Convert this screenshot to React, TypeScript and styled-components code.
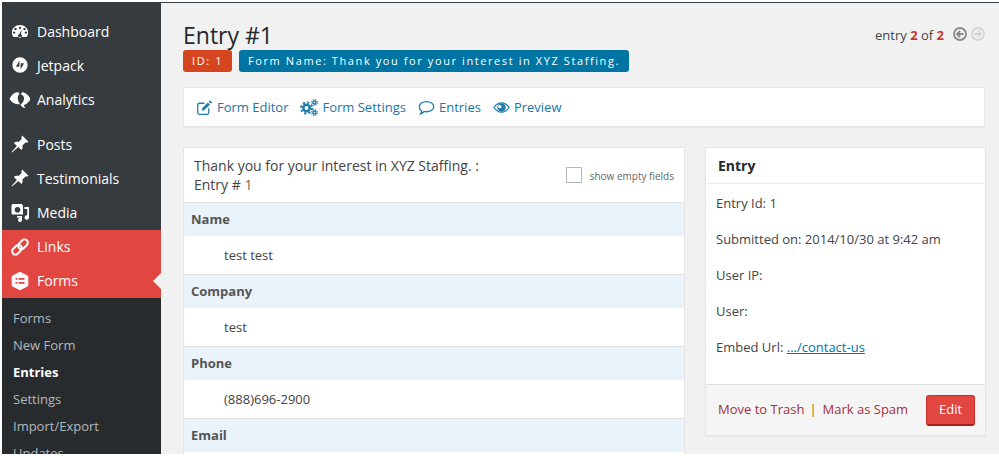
import React from "react";
import styled, { createGlobalStyle } from "styled-components";

const Global = createGlobalStyle`
  html, body { margin: 0; padding: 0; background: #fff; }
  body { font-family: "Open Sans", "Noto Sans", sans-serif; font-size: 13px; color: #444; }
`;
const Frame = styled.div`
  width: 999px; height: 456px; box-sizing: border-box; padding: 2px 0 2px 2px;
  overflow: hidden; position: relative; background: #fff;
`;
const TopLine = styled.div`
  position: absolute; left: 2px; right: 0; top: 2px; height: 1px; background: #3b4045;
`;
const Shell = styled.div`
  display: flex; height: 100%; background: #f1f1f1; overflow: hidden;
`;
const Sidebar = styled.nav`
  width: 159px; flex: none; background: #363b3f; overflow: hidden; display: flex; flex-direction: column;
  padding-top: 12px; box-sizing: border-box;
`;
const MenuItem = styled.div<{ $active?: boolean; $gapTop?: number; $height?: number }>`
  height: ${p => p.$height ?? 34}px; display: flex; align-items: center; position: relative; flex: none;
  margin-top: ${p => p.$gapTop ?? 0}px;
  background: ${p => (p.$active ? "#e14641" : "transparent")};
  color: #fff; font-size: 14px;
`;
const IconSlot = styled.span`
  width: 35px; display: flex; justify-content: center; flex: none; box-sizing: border-box;
  svg { display: block; }
`;
const Caret = styled.span`
  position: absolute; right: 0; top: 50%; margin-top: -8px; width: 0; height: 0;
  border: 8px solid transparent; border-right-color: #f1f1f1; border-left-width: 0;
`;
const SubMenu = styled.div`
  flex: 1; background: #272b2e; padding-top: 7px;
`;
const SubItem = styled.div<{ $current?: boolean }>`
  height: 27px; line-height: 27px; padding-left: 11px; font-size: 13px;
  color: ${p => (p.$current ? "#fff" : "#b4b9be")};
  font-weight: ${p => (p.$current ? 700 : 400)};
`;
const Main = styled.main`
  flex: 1; min-width: 0; padding: 0 14px 0 22px; overflow: hidden;
`;
const Header = styled.header`
  position: relative; height: 85px;
`;
const Title = styled.h1`
  margin: 0; padding-top: 19px; font-size: 23px; line-height: 29px; font-weight: 400; color: #23282d;
`;
const Badges = styled.div`
  display: flex; gap: 7px;
`;
const Badge = styled.span<{ $color: string }>`
  height: 22px; line-height: 22px; padding: 0 9px; border-radius: 3px; background: ${p => p.$color};
  color: #fff; font-size: 11px; letter-spacing: 1.59px; font-weight: 400;
`;
const Pager = styled.div`
  position: absolute; right: 0; top: 24px; display: flex; align-items: center; gap: 4px; font-size: 13px; color: #444;
  b { color: #c8372d; font-weight: 700; }
  svg { display: block; margin-top: -2px; }
`;
const PagerText = styled.span`
  margin-right: 5px;
`;
const Toolbar = styled.div`
  height: 40px; margin-bottom: 20px; box-sizing: border-box; background: #fff; border: 1px solid #e5e5e5;
  box-shadow: 0 1px 1px rgba(0,0,0,.04); display: flex; align-items: center; padding-left: 12px; gap: 12px;
`;
const ToolLink = styled.a`
  display: flex; align-items: center; gap: 4px; color: #1a76a5; font-size: 13px;
  svg { display: block; }
`;
const Columns = styled.div`
  display: flex; gap: 20px; align-items: flex-start;
`;
const EntryCard = styled.section`
  width: 502px; flex: none; box-sizing: border-box; background: #fff; border: 1px solid #e5e5e5; border-bottom: 0;
`;
const EntryHead = styled.div`
  height: 55px; box-sizing: border-box; padding: 8px 10px 0 10px; display: flex; justify-content: space-between;
  font-size: 14px; line-height: 19px; color: #444; border-bottom: 1px solid #e1e1e1;
`;
const Accent = styled.span`
  color: #7d6a50;
`;
const ShowEmpty = styled.label`
  display: flex; align-items: center; gap: 8px; font-size: 10px; color: #666; height: 19px; margin-top: 9px;
`;
const EmptyText = styled.span`
  margin-top: 4px;
`;
const FakeCheck = styled.span`
  width: 14px; height: 14px; border: 1px solid #b4b9be; display: block; background: #fff;
`;
const FieldLabel = styled.div`
  height: 33px; line-height: 33px; padding-left: 7px; background: #eaf2fa; font-weight: 700; font-size: 13px; color: #555;
`;
const FieldValue = styled.div`
  height: 38px; line-height: 38px; padding-left: 40px; font-size: 13px; color: #444; border-bottom: 1px solid #dfdfdf;
`;
const Side = styled.aside`
  width: 281px; flex: none; box-sizing: border-box; background: #fff; border: 1px solid #e5e5e5;
  box-shadow: 0 1px 1px rgba(0,0,0,.04);
`;
const SideTitle = styled.h2`
  margin: 0; height: 36px; line-height: 36px; box-sizing: border-box; padding-left: 12px; font-size: 14px; font-weight: 700;
  color: #23282d; border-bottom: 1px solid #eee;
`;
const SideBody = styled.div`
  padding: 1px 10px 0; height: 200px; box-sizing: border-box;
`;
const SideRow = styled.p`
  margin: 0; height: 36px; line-height: 36px; font-size: 13px; color: #444;
`;
const Link = styled.a`
  color: #0073aa; text-decoration: underline;
`;
const SideFoot = styled.div`
  height: 51px; box-sizing: border-box; background: #f5f5f5; border-top: 1px solid #dfdfdf;
  display: flex; align-items: center; padding: 0 10px 0 12px; font-size: 13px;
`;
const DangerLink = styled.a`
  color: #a3303a; margin-top: -2px;
`;
const Sep = styled.span`
  margin: -2px 6px 0 5px; color: #996800;
`;
const EditButton = styled.button`
  margin-left: auto; width: 49px; height: 31px; padding: 0 0 1px; box-sizing: border-box; font: inherit; color: #fff;
  background: #e14641; border: 1px solid #c9302a; border-bottom: 2px solid #a92019; border-radius: 3px;
`;

const Ico = ({ size = 18, children, vb = "0 0 20 20" }: { size?: number; children: React.ReactNode; vb?: string }) => (
  <svg width={size} height={size} viewBox={vb} fill="#fff">{children}</svg>
);
const Dashboard = () => (
  <Ico><path fillRule="evenodd" d="M10 3.2c-5 0-9 3.6-9 8.4 0 1.9.6 3.6 1.7 5h14.6c1.1-1.4 1.7-3.1 1.7-5 0-4.800-4-8.400-9-8.400zM5 6.500a1.300 1.300 0 1 1 0 2.600 1.300 1.300 0 0 1 0-2.600zm5-1.300a1.300 1.300 0 1 1 0 2.600 1.300 1.300 0 0 1 0-2.600zm5 1.300a1.300 1.300 0 1 1 0 2.600 1.300 1.300 0 0 1 0-2.600zM3.500 10.500a1.300 1.300 0 1 1 0 2.600 1.300 1.300 0 0 1 0-2.600zm13 0a1.300 1.300 0 1 1 0 2.600 1.300 1.300 0 0 1 0-2.600zM12 8.500l-1 5.100a2.100 2.100 0 1 1-2 0z"/></Ico>
);
const Jetpack = () => (
  <Ico><path fillRule="evenodd" d="M10 1.500a8.500 8.500 0 1 0 0 17 8.500 8.500 0 0 0 0-17zM9.300 5v7H5.500zm1.400 3h3.800l-3.800 7z"/></Ico>
);
const Analytics = () => (
  <Ico size={21}>
    <path d="M.5 9.500C2 6 5 3 8 3c1 0 1.800.5 2 1.500C8.500 6 8 8 8.500 10c.3 1.500 1 3 2 4.500-4 .5-8-1.500-10-5z"/>
    <path d="M12.500 3c3 0 6.500 3 8 6.500-1.500 3-4 5-6.500 5.800l1.500 2.700c-2 0-4-1.200-4.500-3l1.800-2c1.700-2 2-5 .7-6.500-.7-.7-1.500-1-2-1 .2-1.500.8-2.500 1-2.500z"/>
  </Ico>
);
const Pin = () => (
  <Ico size={20}><path d="M12.200 1.500l6.300 6.300-1.700 1-1-.6-3.400 3.400c.5 1.700.2 3.200-1 4.500l-3-3L2 18.500l-.5-.5 5.400-5.900-3-3c1.300-1.200 2.800-1.500 4.500-1L11.800 5l-.6-1z"/></Ico>
);
const Media = () => (
  <Ico size={20}><path fillRule="evenodd" d="M3 2h9l1 2v8.500H3a1.500 1.500 0 0 1-1.500-1.500V3.500A1.500 1.500 0 0 1 3 2zm4.500 3a2.800 2.800 0 1 0 0 5.600 2.800 2.800 0 0 0 0-5.600z"/><path d="M14.500 5h4.500v10.500a2.200 2.200 0 1 1-1.800-2.100V7h-2.700zM7 14h5v4a2 2 0 1 1-1.800-2v-.2H7z"/></Ico>
);
const LinkIco = () => (
  <Ico size={20}>
    <g fill="none" stroke="#fff" strokeWidth="2">
      <rect x="1.500" y="9.500" width="11" height="6.500" rx="3.200" transform="rotate(-45 7 12.750)"/>
      <rect x="7.500" y="4" width="11" height="6.500" rx="3.200" transform="rotate(-45 13 7.250)"/>
    </g>
  </Ico>
);
const FormsIco = () => (
  <Ico size={20}><path fillRule="evenodd" d="M10 .8l7.500 3.700.8 1v9l-.8 1-7.500 3.700-7.500-3.700-.8-1v-9l.8-1zM5.500 7v1.800h1.800V7zm3 0v1.800h6V7zm-3 4v1.800h1.800V11zm3 0v1.800h6V11z"/></Ico>
);
const Blue = ({ children, w = 17, h = 17, vb = "0 0 20 20" }: { children: React.ReactNode; w?: number; h?: number; vb?: string }) => (
  <svg width={w} height={h} viewBox={vb} fill="none" stroke="#1f7cac" strokeWidth="1.500">{children}</svg>
);
const EditIco = () => (
  <Blue><path d="M15 11v5a2 2 0 0 1-2 2H4a2 2 0 0 1-2-2V7a2 2 0 0 1 2-2h6"/><path fill="#1f7cac" stroke="none" d="M16.500 1.500l2.500 2.500-1.500 1.500-2.500-2.500zM14 4l2.500 2.500-6.500 6.500-3.200.7.700-3.200z"/></Blue>
);
const GearsIco = () => (
  <Blue w={18} h={17} vb="0 0 18 17">
    <circle cx="6.500" cy="9" r="3.200" strokeWidth="2.600"/>
    <circle cx="6.500" cy="9" r="5.500" strokeWidth="2" strokeDasharray="2.100 2.220"/>
    <circle cx="14.500" cy="3.500" r="1.500" strokeWidth="1.400"/>
    <circle cx="14.500" cy="3.500" r="2.800" strokeWidth="1.200" strokeDasharray="1.200 1.000"/>
    <circle cx="14.500" cy="13.500" r="1.500" strokeWidth="1.400"/>
    <circle cx="14.500" cy="13.500" r="2.800" strokeWidth="1.200" strokeDasharray="1.200 1.000"/>
  </Blue>
);
const BubbleIco = () => (
  <Blue w={17} h={17} vb="0 0 20 18"><path d="M10 2c4.700 0 8.500 2.500 8.500 6s-3.800 6-8.500 6c-1 0-2-.1-2.800-.3C6 15 4.800 16 3 16.500c.7-1 1.200-2 1.300-3.500C2.600 12 1.500 10.200 1.500 8c0-3.500 3.800-6 8.500-6z"/></Blue>
);
const EyeIco = () => (
  <Blue w={17} h={13} vb="0 0 20 14"><path d="M1 7c2.500-3.500 5.500-5.500 9-5.500s6.500 2 9 5.500c-2.500 3.500-5.500 5.500-9 5.500S3.500 10.500 1 7z"/><path fill="#1f7cac" stroke="none" fillRule="evenodd" d="M10 2a5 5 0 1 1 0 10 5 5 0 0 1 0-10zM8 4a2 2 0 1 0 0 4 2 2 0 0 0 0-4z"/></Blue>
);
const Arrow = ({ color, dir }: { color: string; dir: "l" | "r" }) => (
  <svg width={14} height={14} viewBox="0 0 14 14" fill="none" stroke={color}>
    <circle cx="7" cy="7" r="6" strokeWidth="1.800" />
    <path strokeWidth="1.800" d={dir === "l" ? "M10.500 7H4M7 4L4 7l3 3" : "M3.500 7H10M7 4l3 3-3 3"} />
  </svg>
);

const fields = [
  { label: "Name", value: "test test" },
  { label: "Company", value: "test" },
  { label: "Phone", value: "(888)696-2900" },
];

export default function App() {
  return (
    <Frame>
      <Global />
      <Shell>
        <Sidebar>
          <MenuItem><IconSlot><Dashboard /></IconSlot>Dashboard</MenuItem>
          <MenuItem><IconSlot><Jetpack /></IconSlot>Jetpack</MenuItem>
          <MenuItem><IconSlot><Analytics /></IconSlot>Analytics</MenuItem>
          <MenuItem $gapTop={11}><IconSlot><Pin /></IconSlot>Posts</MenuItem>
          <MenuItem><IconSlot><Pin /></IconSlot>Testimonials</MenuItem>
          <MenuItem><IconSlot><Media /></IconSlot>Media</MenuItem>
          <MenuItem $active $gapTop={1} $height={33}><IconSlot><LinkIco /></IconSlot>Links</MenuItem>
          <MenuItem $active $height={35}><IconSlot><FormsIco /></IconSlot>Forms<Caret /></MenuItem>
          <SubMenu>
            <SubItem>Forms</SubItem>
            <SubItem>New Form</SubItem>
            <SubItem $current>Entries</SubItem>
            <SubItem>Settings</SubItem>
            <SubItem>Import/Export</SubItem>
            <SubItem>Updates</SubItem>
          </SubMenu>
        </Sidebar>
        <Main>
          <Header>
            <Title>Entry #1</Title>
            <Badges>
              <Badge $color="#d54520">ID: 1</Badge>
              <Badge $color="#0074a2">Form Name: Thank you for your interest in XYZ Staffing.</Badge>
            </Badges>
            <Pager>
              <PagerText>entry <b>2</b> of <b>2</b></PagerText>
              <Arrow color="#8a8a8a" dir="l" />
              <Arrow color="#d5d5d5" dir="r" />
            </Pager>
          </Header>
          <Toolbar>
            <ToolLink><EditIco />Form Editor</ToolLink>
            <ToolLink><GearsIco />Form Settings</ToolLink>
            <ToolLink><BubbleIco />Entries</ToolLink>
            <ToolLink><EyeIco />Preview</ToolLink>
          </Toolbar>
          <Columns>
            <EntryCard>
              <EntryHead>
                <div>Thank you for your interest in XYZ Staffing. :<br />Entry # <Accent>1</Accent></div>
                <ShowEmpty><FakeCheck /><EmptyText>show empty fields</EmptyText></ShowEmpty>
              </EntryHead>
              {fields.map(f => (
                <React.Fragment key={f.label}>
                  <FieldLabel>{f.label}</FieldLabel>
                  <FieldValue>{f.value}</FieldValue>
                </React.Fragment>
              ))}
              <FieldLabel>Email</FieldLabel>
              <FieldValue />
            </EntryCard>
            <Side>
              <SideTitle>Entry</SideTitle>
              <SideBody>
                <SideRow>Entry Id: 1</SideRow>
                <SideRow>Submitted on: 2014/10/30 at 9:42 am</SideRow>
                <SideRow>User IP:</SideRow>
                <SideRow>User:</SideRow>
                <SideRow>Embed Url: <Link>.../contact-us</Link></SideRow>
              </SideBody>
              <SideFoot>
                <DangerLink>Move to Trash</DangerLink>
                <Sep>|</Sep>
                <DangerLink>Mark as Spam</DangerLink>
                <EditButton>Edit</EditButton>
              </SideFoot>
            </Side>
          </Columns>
        </Main>
      </Shell>
      <TopLine />
    </Frame>
  );
}
